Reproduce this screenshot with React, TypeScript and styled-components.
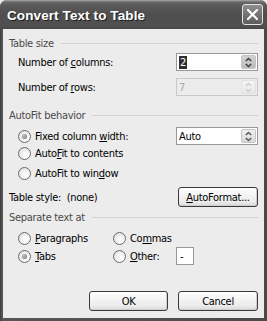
import React from 'react';
import styled, { createGlobalStyle } from 'styled-components';

const GlobalStyle = createGlobalStyle`
  html, body {
    margin: 0;
    padding: 0;
    background: #ececec;
  }
  body {
    font-family: Tahoma, "DejaVu Sans Condensed", "Liberation Sans", sans-serif;
    font-size: 11px;
    letter-spacing: -0.3px;
    color: #000;
  }
`;

const Window = styled.div`
  width: 267px;
  height: 321px;
  display: flex;
  flex-direction: column;
  background: linear-gradient(90deg, #3c3c3c, #575757 2px, #4a4a4a);
  border-radius: 7px 7px 0 0;
  overflow: hidden;
`;

const TitleBar = styled.div`
  height: 29px;
  flex: none;
  display: flex;
  align-items: center;
  justify-content: space-between;
  padding: 0 4px 0 7px;
  box-sizing: border-box;
  background: linear-gradient(180deg, #8c8c8c 0, #6a6a6a 1px, #5a5a5a 4px, #4e4e4e 14px, #505050 24px, #474747 29px);
  border-top: 1px solid #9a9a9a;
`;

const Title = styled.span`
  font-family: "Liberation Sans", "DejaVu Sans", sans-serif;
  font-weight: bold;
  font-size: 13.5px;
  color: #fff;
  text-shadow: 1px 1px 0 #1e1e1e;
  letter-spacing: 0.1px;
`;

const CloseButton = styled.div`
  width: 21px;
  height: 21px;
  box-sizing: border-box;
  border: 1px solid #e4e4e4;
  border-radius: 3px;
  background: linear-gradient(180deg, #8e8e8e, #6e6e6e 60%, #5e5e5e);
  display: flex;
  align-items: center;
  justify-content: center;
  margin-top: -1px;
`;

const Client = styled.div`
  flex: 1;
  margin: 0 3px 3px;
  background: #ececec;
  display: flex;
  flex-direction: column;
  padding: 6px 6px 7px 6px;
`;

const GroupHeader = styled.div<{ $gap: number }>`
  height: 16px;
  margin-top: ${p => p.$gap}px;
  display: flex;
  align-items: center;
  gap: 7px;
  color: #4a4a4a;

  &::after {
    content: '';
    flex: 1;
    height: 1px;
    background: #d2d2d2;
  }
`;

const Row = styled.div<{ $gap: number; $h?: number }>`
  height: ${p => p.$h ?? 16}px;
  margin-top: ${p => p.$gap}px;
  display: flex;
  align-items: center;
  justify-content: space-between;
`;

const IndentLabel = styled.span`
  padding-left: 9px;
`;

const SpinBox = styled.div<{ $disabled?: boolean }>`
  width: 82px;
  height: 18px;
  box-sizing: border-box;
  border: 1px solid ${p => (p.$disabled ? '#c9c9c9' : '#989898')};
  background: ${p => (p.$disabled ? '#ececec' : '#fff')};
  color: ${p => (p.$disabled ? '#a8a8a8' : '#000')};
  display: flex;
  align-items: center;
  justify-content: space-between;
  padding: 1px 1px 1px 2px;
`;

const Selected = styled.span`
  background: #2e2e2e;
  color: #fff;
  padding: 0 1px;
  line-height: 13px;
`;

const SpinButton = styled.div<{ $disabled?: boolean; $dark?: boolean }>`
  width: 15px;
  height: 14px;
  border-radius: 2px;
  background: ${p =>
    p.$disabled
      ? 'linear-gradient(180deg, #f4f4f4, #e8e8e8)'
      : p.$dark
        ? 'linear-gradient(180deg, #d2d2d2, #bcbcbc)'
        : 'linear-gradient(180deg, #f0f0f0, #d8d8d8)'};
  border: 1px solid ${p => (p.$disabled ? '#e2e2e2' : '#c4c4c4')};
  box-sizing: border-box;
  display: flex;
  align-items: center;
  justify-content: center;
`;

const Option = styled.label<{ $flush?: boolean }>`
  display: flex;
  align-items: center;
  gap: 4px;
  padding-left: ${p => (p.$flush ? 0 : 9)}px;
`;

const RadioCircle = styled.span<{ $checked?: boolean }>`
  width: 13px;
  height: 13px;
  flex: none;
  box-sizing: border-box;
  border-radius: 50%;
  border: 1px solid #6b6b6b;
  background: radial-gradient(circle at 65% 65%, #ffffff 0, #f4f4f4 40%, #d4d4d4 100%);
  display: flex;
  align-items: center;
  justify-content: center;

  &::after {
    content: '';
    display: ${p => (p.$checked ? 'block' : 'none')};
    width: 5px;
    height: 5px;
    border-radius: 50%;
    background: radial-gradient(circle at 35% 35%, #c4c4c4, #7c7c7c 80%);
  }
`;

const PushButton = styled.div<{ $w: number }>`
  width: ${p => p.$w}px;
  height: 20px;
  box-sizing: border-box;
  border: 1px solid #3a3a3a;
  border-radius: 3px;
  background: linear-gradient(180deg, #ffffff 0, #f6f6f6 30%, #ececec 75%, #d9d9d9 100%);
  box-shadow: inset -1px -1px 0 #cfcfcf;
  display: flex;
  align-items: center;
  justify-content: center;
`;

const SeparateGrid = styled.div`
  margin-top: 5px;
  display: grid;
  grid-template-columns: 104px 63px 1fr;
  grid-auto-rows: 16px;
  row-gap: 2px;
  align-items: center;
`;

const OtherBox = styled.div`
  width: 18px;
  height: 18px;
  box-sizing: border-box;
  border: 1px solid #989898;
  background: #fff;
  padding-left: 3px;
  display: flex;
  align-items: center;
`;

const Footer = styled.div`
  margin-top: auto;
  display: flex;
  justify-content: flex-end;
  gap: 10px;
`;

const SpinArrows = ({ color }: { color: string }) => (
  <svg width="7" height="11" viewBox="0 0 7 11">
    <path d="M0.8 4 L3.5 1.5 L6.2 4" fill="none" stroke={color} strokeWidth="1.5" />
    <path d="M0.8 7 L3.5 9.5 L6.2 7" fill="none" stroke={color} strokeWidth="1.5" />
  </svg>
);

const CloseGlyph = () => (
  <svg width="11" height="11" viewBox="0 0 11 11">
    <path d="M1 1 L10 10 M10 1 L1 10" stroke="#fff" strokeWidth="2.2" strokeLinecap="square" />
  </svg>
);

const Radio: React.FC<{ checked?: boolean; children: React.ReactNode; flush?: boolean }> = ({
  checked,
  children,
  flush,
}) => (
  <Option $flush={flush}>
    <RadioCircle $checked={checked} />
    <span>{children}</span>
  </Option>
);

const App: React.FC = () => {
  return (
    <>
      <GlobalStyle />
      <Window>
        <TitleBar>
          <Title>Convert Text to Table</Title>
          <CloseButton>
            <CloseGlyph />
          </CloseButton>
        </TitleBar>
        <Client>
          <GroupHeader $gap={0}>Table size</GroupHeader>
          <Row $gap={2} $h={18}>
            <IndentLabel>
              Number of <u>c</u>olumns:
            </IndentLabel>
            <SpinBox>
              <Selected>2</Selected>
              <SpinButton $dark>
                <SpinArrows color="#3c3c3c" />
              </SpinButton>
            </SpinBox>
          </Row>
          <Row $gap={7} $h={18}>
            <IndentLabel>
              Number of <u>r</u>ows:
            </IndentLabel>
            <SpinBox $disabled>
              <span>7</span>
              <SpinButton $disabled>
                <SpinArrows color="#cfcfcf" />
              </SpinButton>
            </SpinBox>
          </Row>

          <GroupHeader $gap={11}>AutoFit behavior</GroupHeader>
          <Row $gap={4} $h={18}>
            <Radio checked>
              Fixed column <u>w</u>idth:
            </Radio>
            <SpinBox>
              <span>Auto</span>
              <SpinButton>
                <SpinArrows color="#5a5a5a" />
              </SpinButton>
            </SpinBox>
          </Row>
          <Row $gap={0}>
            <Radio>
              Auto<u>F</u>it to contents
            </Radio>
          </Row>
          <Row $gap={4}>
            <Radio>
              AutoFit to win<u>d</u>ow
            </Radio>
          </Row>
          <Row $gap={6} $h={20}>
            <span>Table style:&nbsp; (none)</span>
            <PushButton $w={80}>
              <span>
                <u>A</u>utoFormat...
              </span>
            </PushButton>
          </Row>

          <GroupHeader $gap={2}>Separate text at</GroupHeader>
          <SeparateGrid>
            <Radio>
              <u>P</u>aragraphs
            </Radio>
            <Radio flush>
              Co<u>m</u>mas
            </Radio>
            <span />
            <Radio checked>
              <u>T</u>abs
            </Radio>
            <Radio flush>
              <u>O</u>ther:
            </Radio>
            <OtherBox>-</OtherBox>
          </SeparateGrid>

          <Footer>
            <PushButton $w={79}>OK</PushButton>
            <PushButton $w={80}>Cancel</PushButton>
          </Footer>
        </Client>
      </Window>
    </>
  );
};

export default App;
